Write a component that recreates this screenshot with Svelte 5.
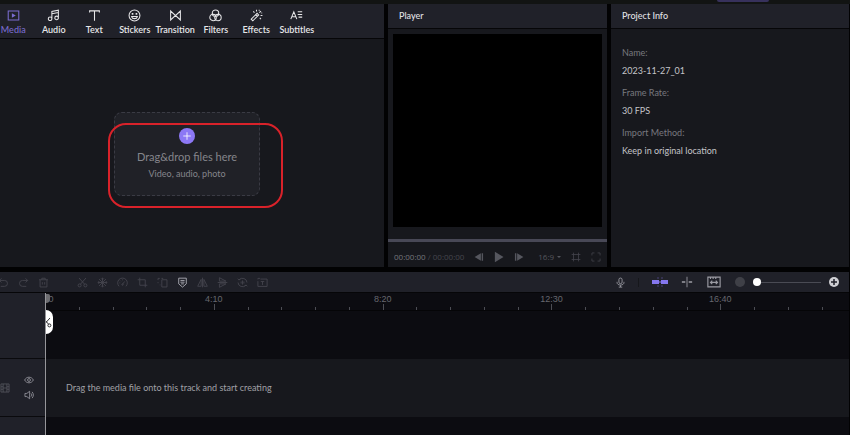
<script>
	// every icon lives on a 16x16 grid: line = stroked path, fill = solid path
	const icons = {
		media: { line: 'M1.5 2.5h13v11h-13z', fill: 'M6 5.2v5.6L10.8 8z' },
		audio: { line: 'M6 12V3l8-1.5V11M6 12a2.2 2.2 0 1 1-4.4 0A2.2 2.2 0 0 1 6 12zM14 11a2.2 2.2 0 1 1-4.4 0A2.2 2.2 0 0 1 14 11zM6 5.8l8-1.5' },
		text: { line: 'M2 4.2V2.3h12v1.9M8 2.3V14.5' },
		stickers: { line: 'M14.7 8A6.7 6.7 0 1 1 1.3 8a6.7 6.7 0 0 1 13.4 0zM4.5 9.3c.6 3.4 6.4 3.4 7 0z', fill: 'M4.6 5h2v2h-2zM9.4 5h2v2h-2z' },
		transition: { line: 'M2 2.5v11L8 8zM14 2.5v11L8 8z' },
		filters: { line: 'M12 5.2a4 4 0 1 1-8 0 4 4 0 0 1 8 0zM9 10.4a4 4 0 1 1-8 0 4 4 0 0 1 8 0zM15 10.4a4 4 0 1 1-8 0 4 4 0 0 1 8 0z' },
		effects: { line: 'M1.5 12.5l7.2-7.2 2 2-7.2 7.2zM7 7l2 2M8 1v2M11.5 4.5l2-2M13 8h2.3M12 11l1.5 1.5M4 3l1.5 1.5M11.3 1v1M15 5h-1' },
		subtitles: { line: 'M1 12.5L4.7 3.5l3.7 9M2.3 9.5h4.8M9.5 3.5H15M9.5 6.8H15M10.5 10H15' },
		undo: { line: 'M5 2L2 5l3 3M2 5h7.5a4.3 4.3 0 0 1 0 8.6H4' },
		redo: { line: 'M11 2l3 3-3 3M14 5H6.5a4.3 4.3 0 0 0 0 8.6H12' },
		trash: { line: 'M1.5 4h13M5.5 4V1.8h5V4M3 4v10.5h10V4M6.3 7.5v3.5M9.7 7.5v3.5' },
		cut: { line: 'M3 1.5l8.2 9.2M13 1.5L4.8 10.7M6 12.2a2.2 2.2 0 1 1-4.4 0 2.2 2.2 0 0 1 4.4 0zM14.4 12.2a2.2 2.2 0 1 1-4.4 0 2.2 2.2 0 0 1 4.4 0z' },
		freeze: { line: 'M8 1v14M1 8h14M3 3l10 10M13 3L3 13M6 2l2 2 2-2M6 14l2-2 2 2M2 6l2 2-2 2M14 6l-2 2 2 2' },
		speed: { line: 'M3 13.5a7 7 0 1 1 10 0M8 10.5l3.2-4M3.5 8.5h1.3M8 3.5v1.3M4.8 5.3l.9.9M9 11a1 1 0 1 1-2 0 1 1 0 0 1 2 0z' },
		crop: { line: 'M4 1v11h11M1 4h11v11' },
		copy: { line: 'M7 4h7.5v10.5H7zM5 11.5H4M1.5 9V7.5M1.5 4.5V2H4M6.5 2H9' },
		marker: { line: 'M2.5 1.7h11V10L8 14.7 2.5 10zM5 5h6M5 7.5h6M6 10h4' },
		mirror: { line: 'M8 1v14M6 3.5v10H1zM10 3.5v10h5z' },
		flip: { line: 'M1 8h14M3.5 6V1L13 6zM3.5 10v5l9.5-5z' },
		motion: { line: 'M3 4.2A6.5 6.5 0 0 1 14.5 8M13 11.8A6.5 6.5 0 0 1 1.5 8M1 2.5l2 2 2-2M15 13.5l-2-2-2 2M6 6.5v3M8 5v6M10 6.5v3' },
		speech: { line: 'M5 3H14.7v10.7H1.3V6M1.3 3.5V2h3M5.5 6.5h5M8 6.5V11.5' },
		mic: { line: 'M8 1.5a2.3 2.3 0 0 1 2.3 2.3v3.6a2.3 2.3 0 0 1-4.6 0V3.8A2.3 2.3 0 0 1 8 1.5zM3 7v1c0 5 10 5 10 0V7M8 12v2.5M5.5 14.7h5' },
		fit: { line: 'M1 2.5h14v11H1zM4 8.5h8M6 6.5l-2 2 2 2M10 6.5l2 2-2 2M4 3v1.5M7 3v1.5M10 3v1.5' },
		prev: { fill: 'M11 2v12L1 8zM12.3 2h2.2v12h-2.2z' },
		play: { fill: 'M2.5 1v14L14 8z' },
		next: { fill: 'M5 2v12l10-6zM1.5 2h2.2v12H1.5z' },
		frame: { line: 'M4 1v14M12 1v14M1 4h14M1 12h14' },
		expand: { line: 'M1.5 5.5v-4h4M10.5 1.5h4v4M14.5 10.5v4h-4M5.5 14.5h-4v-4' },
		film: { line: 'M1.5 1.5h13v13h-13zM5 1.5v13M11 1.5v13M5 8h6M1.5 6H5M1.5 10H5M11 6h3.5M11 10h3.5' },
		eye: { line: 'M1 8c3-6 11-6 14 0-3 6-11 6-14 0zM10.3 8a2.3 2.3 0 1 1-4.6 0 2.3 2.3 0 0 1 4.6 0z' },
		volume: { line: 'M1.5 5.5h3L9 2v12l-4.5-3.5h-3zM11.3 5.5c1.3 1.5 1.3 3.5 0 5M13 3c2.6 3 2.6 7 0 10' },
		plus: { line: 'M8 2v12M2 8h12' }
	};

	const tabs = [
		['media', 'Media'],
		['audio', 'Audio'],
		['text', 'Text'],
		['stickers', 'Stickers'],
		['transition', 'Transition'],
		['filters', 'Filters'],
		['effects', 'Effects'],
		['subtitles', 'Subtitles']
	];

	const history = [
		['undo', 'Undo'],
		['redo', 'Redo'],
		['trash', 'Delete']
	];

	const tools = [
		['cut', 'Split'],
		['freeze', 'Freeze frame'],
		['speed', 'Speed'],
		['crop', 'Crop'],
		['copy', 'Copy'],
		['marker', 'Marker'],
		['mirror', 'Mirror'],
		['flip', 'Flip'],
		['motion', 'Motion'],
		['speech', 'Text to speech']
	];

	const info = [
		['Name:', '2023-11-27_01'],
		['Frame Rate:', '30 FPS'],
		['Import Method:', 'Keep in original location']
	];

	const marks = ['0', '4:10', '8:20', '12:30', '16:40'];

	let activeTab = $state('media');
	let zoom = $state(0);
</script>

{#snippet icon(name)}
	<svg class="icon" viewBox="0 0 16 16" aria-hidden="true">
		{#if icons[name].line}<path class="line" d={icons[name].line} />{/if}
		{#if icons[name].fill}<path class="solid" d={icons[name].fill} />{/if}
	</svg>
{/snippet}

<div class="editor">
	<header class="titlebar"><span class="export"></span></header>

	<main class="panels">
		<section class="panel">
			<div class="tabbar">
				<nav class="tabs">
					{#each tabs as [id, label]}
						<button class="tab" class:active={activeTab === id} onclick={() => (activeTab = id)}>
							{@render icon(id)}
							{label}
						</button>
					{/each}
				</nav>
			</div>
			<div class="library">
				<div class="drop-wrap">
					<button class="dropzone">
						<span class="add">{@render icon('plus')}</span>
						<span class="drop-title">Drag&amp;drop files here</span>
						<span class="drop-hint">Video, audio, photo</span>
					</button>
					<div class="highlight"></div>
				</div>
			</div>
		</section>

		<section class="panel">
			<h2>Player</h2>
			<div class="screen"></div>
			<div class="progress"></div>
			<div class="controls">
				<span class="time">00:00:00 <i>/ 00:00:00</i></span>
				<div class="transport">
					<button aria-label="Previous frame">{@render icon('prev')}</button>
					<button class="play" aria-label="Play">{@render icon('play')}</button>
					<button aria-label="Next frame">{@render icon('next')}</button>
				</div>
				<button class="ratio">16:9 <span class="caret"></span></button>
				<div class="view">
					<button aria-label="Safe zone">{@render icon('frame')}</button>
					<button aria-label="Full screen">{@render icon('expand')}</button>
				</div>
			</div>
		</section>

		<section class="panel">
			<h2>Project Info</h2>
			<dl>
				{#each info as [term, value]}
					<dt>{term}</dt>
					<dd>{value}</dd>
				{/each}
			</dl>
		</section>
	</main>

	<div class="toolbar">
		<div class="group history">
			{#each history as [id, label]}
				<button aria-label={label}>{@render icon(id)}</button>
			{/each}
		</div>
		<div class="group">
			{#each tools as [id, label]}
				<button class:enabled={id === 'marker'} aria-label={label}>{@render icon(id)}</button>
			{/each}
		</div>
		<div class="group right">
			<button class="mic" aria-label="Record voiceover">{@render icon('mic')}</button>
			<span class="divider"></span>
			<button class="wide snap" aria-label="Snapping">
				<svg viewBox="0 0 16 10" aria-hidden="true">
					<path class="solid" d="M0 3h7v4H0zM9 3h7v4H9zM7 4.5h2v1H7z" />
					<path class="faint" d="M5 1h2M9 1h2M5 9h2M9 9h2" />
				</svg>
			</button>
			<button class="wide" aria-label="Align">
				<svg viewBox="0 0 16 14" aria-hidden="true">
					<path class="solid" d="M2 6h4v2H2zM10 6h4v2h-4zM7.5 1h1v12h-1z" />
				</svg>
			</button>
			<button class="wide fit" aria-label="Fit timeline">{@render icon('fit')}</button>
			<button class="round" aria-label="Zoom out"></button>
			<input type="range" min="0" max="100" bind:value={zoom} aria-label="Timeline zoom" />
			<button class="round in" aria-label="Zoom in">{@render icon('plus')}</button>
		</div>
	</div>

	<div class="timeline">
		<div class="heads">
			<div class="head top"></div>
			<div class="head">
				<span class="film">{@render icon('film')}</span>
				<div class="toggles">
					<button aria-label="Hide track">{@render icon('eye')}</button>
					<button aria-label="Mute track">{@render icon('volume')}</button>
				</div>
			</div>
			<div class="head rest"></div>
		</div>
		<div class="lanes">
			<div class="ruler">
				{#each marks as mark}
					<div class="mark">
						<span>{mark}</span>
						<i></i><i></i><i></i><i></i><i></i>
					</div>
				{/each}
			</div>
			<div class="lane"></div>
			<div class="lane media">Drag the media file onto this track and start creating</div>
			<div class="playhead">
				<span class="handle"></span>
				<button class="splitter" aria-label="Split at playhead">{@render icon('cut')}</button>
			</div>
		</div>
	</div>
</div>

<style>
	:global(body) {
		margin: 0;
		background: #000;
	}

	.editor {
		display: flex;
		flex-direction: column;
		min-height: 100vh;
		overflow: hidden;
		background: #020203;
		color: #c4c4c8;
		font: 9px/12px Lato, 'Open Sans', sans-serif;
	}

	button {
		display: flex;
		align-items: center;
		justify-content: center;
		padding: 0;
		border: 0;
		background: none;
		color: inherit;
		font: inherit;
	}

	svg {
		display: block;
		width: 100%;
		height: 100%;
	}

	.line {
		fill: none;
		stroke: currentColor;
		stroke-width: 1.3;
	}

	.solid {
		fill: currentColor;
	}

	.faint {
		stroke: currentColor;
		opacity: 0.4;
	}

	.titlebar {
		display: flex;
		justify-content: flex-end;
		height: 4px;
		padding-right: 81px;
		background: #121413;
	}

	.export {
		width: 52px;
		height: 2px;
		border-radius: 0 0 6px 6px;
		background: #37315c;
	}

	/* upper panels */
	.panels {
		display: grid;
		grid-template-columns: 384fr 219fr 238fr;
		gap: 4px;
		padding-right: 1px;
		margin-bottom: 5px;
	}

	.panel {
		display: flex;
		flex-direction: column;
		min-width: 0;
		height: 263px;
		overflow: hidden;
		background: #17181d;
	}

	h2 {
		margin: 0;
		padding: 0 11px;
		border-bottom: 1px solid #060608;
		background: #202129;
		color: #e0e0e4;
		font-size: 9px;
		font-weight: 500;
		line-height: 24px;
	}

	.tabbar {
		border-bottom: 1px solid #060608;
		background: #202129;
	}

	.tabs {
		display: grid;
		grid-template-columns: repeat(8, 1fr);
		width: 324px;
		height: 34px;
		margin-left: -7px;
	}

	.tab {
		flex-direction: column;
		gap: 2px;
		padding-top: 2px;
		color: #e6e6e8;
		font-weight: 600;
	}

	.tab .icon {
		width: 13px;
		height: 13px;
	}

	.tab.active {
		color: #7a6cd0;
		font-weight: 500;
	}

	.library {
		display: flex;
		flex: 1;
		justify-content: center;
		align-items: flex-start;
		padding-top: 73px;
	}

	.drop-wrap {
		position: relative;
		width: 38%;
		margin-right: 10px;
	}

	.dropzone {
		flex-direction: column;
		box-sizing: border-box;
		width: 100%;
		height: 84px;
		padding-top: 2px;
		border: 1px dashed #3a3b44;
		border-radius: 8px;
		background: #202127;
		color: #85858b;
	}

	.add {
		box-sizing: border-box;
		width: 16px;
		height: 16px;
		margin-bottom: 4px;
		padding: 3px;
		border-radius: 50%;
		background: #8c78f5;
		color: #fff;
	}

	.drop-title {
		font-size: 11px;
		line-height: 18px;
	}

	.drop-hint {
		line-height: 16px;
	}

	.highlight {
		position: absolute;
		inset: 11px -23px -12px -6px;
		border: 2px solid #d9222a;
		border-radius: 18px;
		pointer-events: none;
	}

	.screen {
		flex: 1;
		margin: 5px 5px 12px;
		background: #000;
	}

	.progress {
		height: 3px;
		background: #484856;
	}

	.controls {
		display: flex;
		align-items: center;
		justify-content: space-between;
		box-sizing: border-box;
		height: 25px;
		padding: 4px 6px 0;
		color: #55565e;
		font-family: 'Open Sans', sans-serif;
		font-size: 8px;
	}

	.time {
		color: #74757c;
		white-space: nowrap;
	}

	.time i {
		color: #45464d;
		font-style: normal;
	}

	.controls .icon {
		width: 10px;
		height: 10px;
	}

	.controls .play .icon {
		width: 12px;
		height: 12px;
	}

	.transport,
	.view {
		display: flex;
		gap: 9px;
	}

	.ratio {
		gap: 3px;
		margin-left: 4px;
	}

	.caret {
		border: 2px solid transparent;
		border-top-color: currentColor;
		border-bottom: 0;
	}

	.view {
		gap: 10px;
		color: #42434b;
	}

	dl {
		margin: 0;
		padding: 15px 11px;
		line-height: 18px;
	}

	dt {
		color: #77787f;
	}

	dd {
		margin: 0 0 4px;
	}

	/* toolbar */
	.toolbar {
		display: flex;
		align-items: center;
		gap: 19px;
		height: 20px;
		margin-right: 1px;
		border-bottom: 1px solid #060608;
		background: #202129;
		color: #44454e;
	}

	.group {
		display: flex;
		align-items: center;
	}

	.group button {
		width: 20px;
		height: 20px;
	}

	.group .icon {
		width: 11px;
		height: 11px;
	}

	.history {
		margin-left: -7px;
	}

	.group .enabled {
		color: #b0b0b8;
	}

	.right {
		margin-left: auto;
		padding-right: 5px;
		color: #9c9ca4;
	}

	.divider {
		width: 1px;
		height: 9px;
		margin: 0 7px 0 8px;
		background: #16171b;
	}

	.group .wide {
		width: 27px;
	}

	.wide svg {
		width: 16px;
		height: 12px;
	}

	.snap {
		color: #8577ee;
	}

	.group .fit .icon {
		width: 14px;
		height: 14px;
	}

	.group .round {
		width: 10px;
		height: 10px;
		margin: 0 8px;
		border-radius: 50%;
		background: #3f4047;
	}

	.group .in {
		margin-right: 5px;
		background: #cfcfd4;
		color: #202129;
	}

	.group .in .icon {
		width: 8px;
		height: 8px;
	}

	.in .line {
		stroke-width: 3;
	}

	input[type='range'] {
		width: 68px;
		height: 10px;
		margin: 0;
		appearance: none;
		background: linear-gradient(#4a4b54, #4a4b54) center / 100% 1px no-repeat;
	}

	input[type='range']::-webkit-slider-thumb {
		width: 8px;
		height: 8px;
		appearance: none;
		border-radius: 50%;
		background: #fff;
	}

	/* timeline */
	.timeline {
		display: flex;
		flex: 1;
	}

	.heads {
		display: flex;
		flex-direction: column;
		width: 45px;
	}

	.head {
		display: flex;
		align-items: center;
		box-sizing: border-box;
		height: 58px;
		border-bottom: 1px solid #0a0a0d;
		background: #202129;
	}

	.head.top {
		height: 66px;
	}

	.head.rest {
		flex: 1;
		border: 0;
	}

	.film {
		width: 10px;
		height: 10px;
		color: #55565e;
	}

	.toggles {
		display: flex;
		flex-direction: column;
		gap: 5px;
		margin-left: 14px;
		color: #9a9aa2;
	}

	.toggles button {
		width: 10px;
		height: 10px;
	}

	.lanes {
		position: relative;
		flex: 1;
		min-width: 0;
		margin-right: 1px;
		background: #0c0c11;
	}

	.ruler {
		display: flex;
		box-sizing: border-box;
		height: 18px;
		overflow: hidden;
		border-bottom: 1px solid #050507;
	}

	.mark {
		display: grid;
		grid-template-columns: repeat(5, 1fr);
		grid-template-rows: 12px 5px;
		flex: 0 0 21%;
		color: #66676e;
		font-family: 'Liberation Sans', Arial, sans-serif;
	}

	.mark span {
		grid-column: 1 / -1;
		width: 40px;
		margin-left: -20px;
		text-align: center;
	}

	.mark:first-child span {
		margin-left: -14px;
	}

	.mark i {
		height: 3px;
		margin-top: 2px;
		border-left: 1px solid #4c4d54;
	}

	.mark i:first-of-type {
		height: 6px;
		margin-top: -1px;
	}

	.lane {
		height: 48px;
	}

	.lane.media {
		display: flex;
		align-items: center;
		height: 58px;
		padding-left: 21px;
		background: #17181d;
		color: #a0a0a6;
	}

	.playhead {
		position: absolute;
		inset: 0 auto 0 0;
		width: 1px;
		background: #96969a;
	}

	.handle {
		position: absolute;
		top: 1px;
		left: 1px;
		width: 4px;
		height: 9px;
		border-radius: 0 2px 5px 0;
		background: #6d6d71;
	}

	.splitter {
		position: absolute;
		top: 17px;
		left: 1px;
		width: 7px;
		height: 24px;
		justify-content: flex-end;
		overflow: hidden;
		border-radius: 0 7px 7px 0;
		background: #fff;
		color: #18181c;
	}

	.splitter .icon {
		flex: none;
		width: 11px;
		height: 11px;
		margin-right: 1px;
	}
</style>
